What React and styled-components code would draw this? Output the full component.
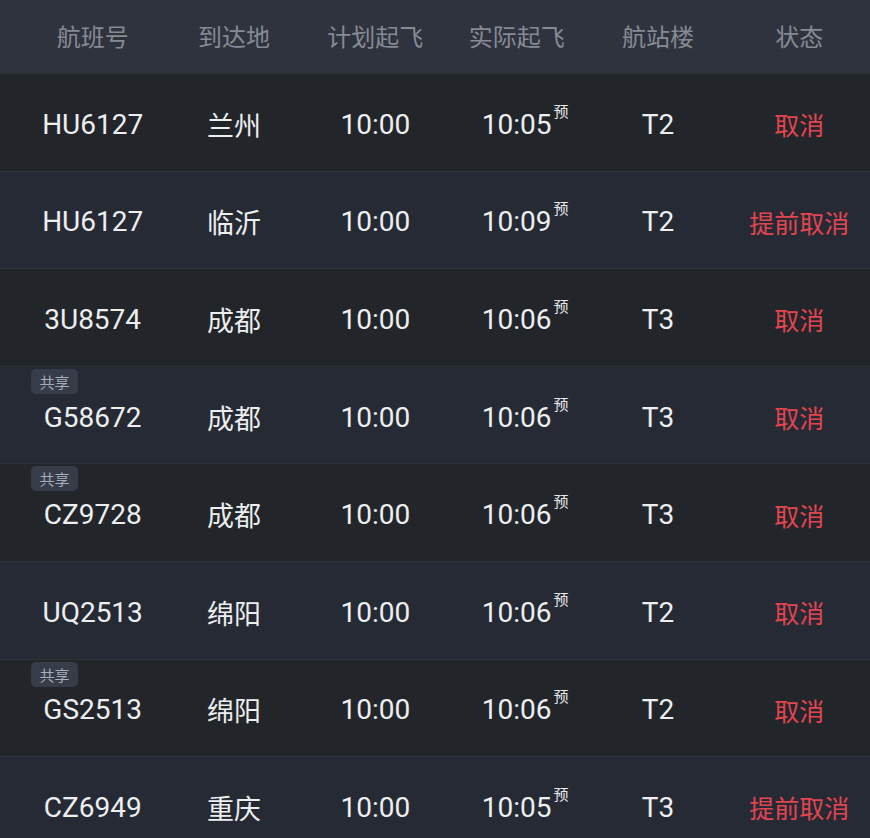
import React from "react";
import styled, { createGlobalStyle } from "styled-components";

const Global = createGlobalStyle`
  html, body { margin: 0; padding: 0; background: #22262b; }
  body { font-family: Roboto, "Noto Sans CJK SC", sans-serif; overflow: hidden; }
`;

const Board = styled.div`
  width: 870px;
  height: 838px;
  overflow: hidden;
  background: #22262b;
`;

const Header = styled.div`
  display: grid;
  grid-template-columns: repeat(6, 1fr);
  padding-left: 22px;
  height: 73px;
  align-items: center;
  background: #2f333e;
`;

const HeadCell = styled.div`
  text-align: center;
  color: #868a94;
  font-size: 24px;
  font-family: "Noto Sans CJK SC", sans-serif;
  padding-bottom: 2px;
`;

const Row = styled.div`
  display: grid;
  grid-template-columns: repeat(6, 1fr);
  padding-left: 22px;
  height: 97.6px;
  box-sizing: border-box;
  align-items: center;
  background: ${(p) => (p.$alt ? "#262a35" : "#22262b")};
  border-top: 1px solid #2d3237;
`;

const Cell = styled.div`
  position: relative;
  height: 100%;
  display: flex;
  align-items: center;
  justify-content: center;
  color: #eceef0;
  font-size: 28px;
  font-family: Roboto, "Noto Sans CJK SC", sans-serif;
  padding-top: 4px;
  box-sizing: border-box;
`;

const PlaceCell = styled(Cell)`
  font-size: 27px;
  font-family: "Noto Sans CJK SC", sans-serif;
`;

const StatusCell = styled(Cell)`
  font-size: 25px;
  color: #e2454f;
  font-family: "Noto Sans CJK SC", sans-serif;
`;

const Badge = styled.span`
  position: absolute;
  left: 9px;
  top: 2px;
  width: 47px;
  height: 25px;
  border-radius: 5px;
  background: #373c49;
  color: #a8adb8;
  font-size: 15px;
  font-family: "Noto Sans CJK SC", sans-serif;
  display: flex;
  align-items: center;
  justify-content: center;
`;

const Time = styled.span`
  position: relative;
`;

const Sup = styled.span`
  position: absolute;
  left: 100%;
  top: -8px;
  margin-left: 2px;
  font-size: 15px;
  color: #e6e8ea;
  font-family: "Noto Sans CJK SC", sans-serif;
`;

const heads = ["航班号", "到达地", "计划起飞", "实际起飞", "航站楼", "状态"];

const flights = [
  { no: "HU6127", dest: "兰州", plan: "10:00", act: "10:05", term: "T2", status: "取消" },
  { no: "HU6127", dest: "临沂", plan: "10:00", act: "10:09", term: "T2", status: "提前取消" },
  { no: "3U8574", dest: "成都", plan: "10:00", act: "10:06", term: "T3", status: "取消" },
  { no: "G58672", dest: "成都", plan: "10:00", act: "10:06", term: "T3", status: "取消", share: true },
  { no: "CZ9728", dest: "成都", plan: "10:00", act: "10:06", term: "T3", status: "取消", share: true },
  { no: "UQ2513", dest: "绵阳", plan: "10:00", act: "10:06", term: "T2", status: "取消" },
  { no: "GS2513", dest: "绵阳", plan: "10:00", act: "10:06", term: "T2", status: "取消", share: true },
  { no: "CZ6949", dest: "重庆", plan: "10:00", act: "10:05", term: "T3", status: "提前取消" },
];

export default function App() {
  return (
    <Board>
      <Global />
      <Header>
        {heads.map((h) => (
          <HeadCell key={h}>{h}</HeadCell>
        ))}
      </Header>
      {flights.map((f, i) => (
        <Row key={i} $alt={i % 2 === 1}>
          <Cell>
            {f.share && <Badge>共享</Badge>}
            {f.no}
          </Cell>
          <PlaceCell>{f.dest}</PlaceCell>
          <Cell>{f.plan}</Cell>
          <Cell>
            <Time>
              {f.act}
              <Sup>预</Sup>
            </Time>
          </Cell>
          <Cell>{f.term}</Cell>
          <StatusCell>{f.status}</StatusCell>
        </Row>
      ))}
    </Board>
  );
}
